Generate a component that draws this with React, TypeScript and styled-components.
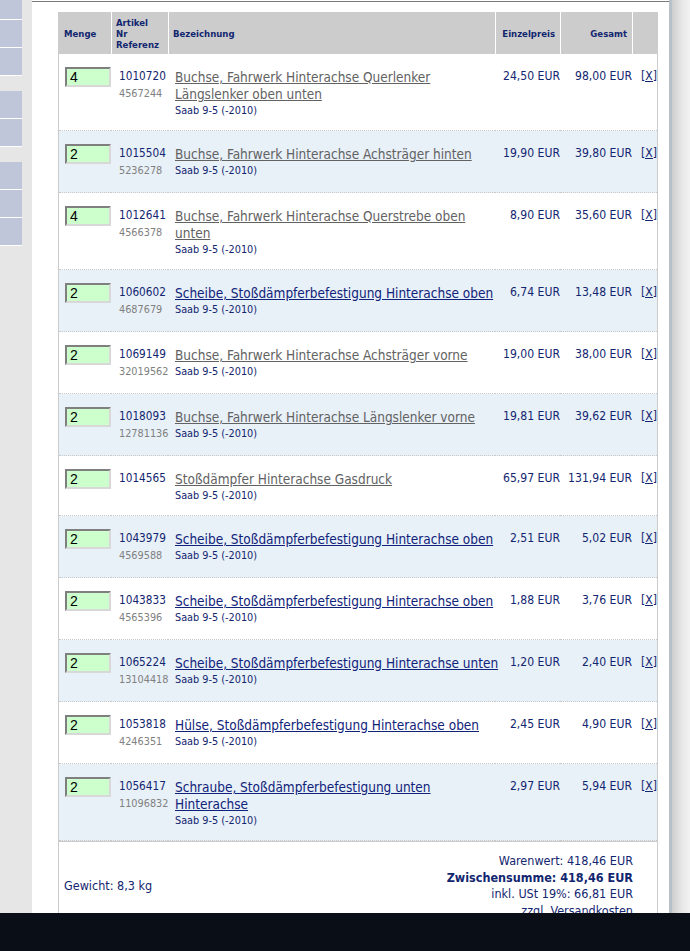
import React from "react";
import styled, { createGlobalStyle } from "styled-components";

const GlobalStyle = createGlobalStyle`
  html, body { margin: 0; padding: 0; background: #ffffff; }
  body {
    font-family: "DejaVu Sans Condensed", "DejaVu Sans", sans-serif;
    font-stretch: condensed;
    color: #10246e;
  }
`;

const NAVY = "#12266f";

type Item = {
  qty: string;
  nr: string;
  ref?: string;
  title: string[];
  link: boolean;
  price: string;
  total: string;
};

const items: Item[] = [
  { qty: "4", nr: "1010720", ref: "4567244", title: ["Buchse, Fahrwerk Hinterachse Querlenker", "Längslenker oben unten"], link: false, price: "24,50 EUR", total: "98,00 EUR" },
  { qty: "2", nr: "1015504", ref: "5236278", title: ["Buchse, Fahrwerk Hinterachse Achsträger hinten"], link: false, price: "19,90 EUR", total: "39,80 EUR" },
  { qty: "4", nr: "1012641", ref: "4566378", title: ["Buchse, Fahrwerk Hinterachse Querstrebe oben", "unten"], link: false, price: "8,90 EUR", total: "35,60 EUR" },
  { qty: "2", nr: "1060602", ref: "4687679", title: ["Scheibe, Stoßdämpferbefestigung Hinterachse oben"], link: true, price: "6,74 EUR", total: "13,48 EUR" },
  { qty: "2", nr: "1069149", ref: "32019562", title: ["Buchse, Fahrwerk Hinterachse Achsträger vorne"], link: false, price: "19,00 EUR", total: "38,00 EUR" },
  { qty: "2", nr: "1018093", ref: "12781136", title: ["Buchse, Fahrwerk Hinterachse Längslenker vorne"], link: false, price: "19,81 EUR", total: "39,62 EUR" },
  { qty: "2", nr: "1014565", title: ["Stoßdämpfer Hinterachse Gasdruck"], link: false, price: "65,97 EUR", total: "131,94 EUR" },
  { qty: "2", nr: "1043979", ref: "4569588", title: ["Scheibe, Stoßdämpferbefestigung Hinterachse oben"], link: true, price: "2,51 EUR", total: "5,02 EUR" },
  { qty: "2", nr: "1043833", ref: "4565396", title: ["Scheibe, Stoßdämpferbefestigung Hinterachse oben"], link: true, price: "1,88 EUR", total: "3,76 EUR" },
  { qty: "2", nr: "1065224", ref: "13104418", title: ["Scheibe, Stoßdämpferbefestigung Hinterachse unten"], link: true, price: "1,20 EUR", total: "2,40 EUR" },
  { qty: "2", nr: "1053818", ref: "4246351", title: ["Hülse, Stoßdämpferbefestigung Hinterachse oben"], link: true, price: "2,45 EUR", total: "4,90 EUR" },
  { qty: "2", nr: "1056417", ref: "11096832", title: ["Schraube, Stoßdämpferbefestigung unten", "Hinterachse"], link: true, price: "2,97 EUR", total: "5,94 EUR" },
];

const navGroups: number[][] = [[19, 27, 27], [27, 27], [27, 27, 27]];

const Page = styled.div`
  display: flex;
  min-height: 951px;
`;

const Sidebar = styled.nav`
  width: 32px;
  flex: none;
  background: #e6e6e6;
  display: flex;
  flex-direction: column;
  gap: 15px;
`;

const NavGroup = styled.div`
  display: flex;
  flex-direction: column;
`;

const NavItem = styled.div<{ $h: number }>`
  width: 22px;
  height: ${(p) => p.$h}px;
  background: #c0c6da;
  border-bottom: 1px solid #ffffff;
`;

const Main = styled.main`
  flex: 1;
  background: linear-gradient(#ffffff 0 1px, #7a7a7a 1px 2px, #ffffff 2px);
  padding: 12px 11px 0 26px;
`;

const RightEdge = styled.div`
  width: 21px;
  flex: none;
  border-left: 3px solid #b8c0c8;
  background: linear-gradient(90deg, #cdcdcd, #e9e9e9 60%, #f1f1f1);
  box-sizing: border-box;
`;

const Table = styled.table`
  width: 600px;
  table-layout: fixed;
  border-collapse: separate;
  border-spacing: 0;
  border-left: 1px solid #cccccc;
  border-right: 1px solid #cccccc;
`;

const Th = styled.th<{ $align?: string; $sep?: boolean }>`
  height: 42px;
  padding: 0 5px;
  background: #cccccc;
  color: ${NAVY};
  font-size: 9.5px;
  font-weight: bold;
  line-height: 11px;
  text-align: ${(p) => p.$align || "left"};
  vertical-align: middle;
  box-shadow: ${(p) => (p.$sep ? "inset 1px 0 0 #ffffff" : "none")};
`;

const Tr = styled.tr<{ $alt: boolean }>`
  background: ${(p) => (p.$alt ? "#e8f0f8" : "#ffffff")};
`;

const Td = styled.td<{ $pl?: number; $pt?: number; $pb?: number; $align?: string }>`
  padding: ${(p) => p.$pt ?? 15}px 0 ${(p) => p.$pb ?? 11}px ${(p) => p.$pl ?? 0}px;
  text-align: ${(p) => p.$align || "left"};
  vertical-align: top;
  border-bottom: 1px dotted #c8c8c8;
  font-size: 12.1px;
  line-height: 16px;
  color: ${NAVY};
  white-space: nowrap;
`;

const QtyInput = styled.input`
  display: block;
  box-sizing: border-box;
  width: 46px;
  height: 20px;
  margin: 0;
  padding: 0 3px;
  background: #ccffcc;
  border: 2px solid;
  border-color: #7f7f7f #d8d8d8 #d8d8d8 #7f7f7f;
  font-family: "Liberation Sans", Arial, sans-serif;
  font-size: 14px;
  color: #000000;
`;

const Nr = styled.div`
  font-size: 11.7px;
  line-height: 17px;
`;

const RefNr = styled.div`
  font-size: 10.8px;
  line-height: 17px;
  color: #808080;
`;

const Title = styled.a<{ $link: boolean }>`
  display: block;
  font-size: 13.5px;
  line-height: 17px;
  color: ${(p) => (p.$link ? "#0f237a" : "#626262")};
  text-decoration: underline;
  cursor: pointer;
`;

const Model = styled.div`
  font-size: 10.8px;
  line-height: 16px;
  color: ${NAVY};
`;

const Remove = styled.a`
  color: ${NAVY};
  text-decoration: underline;
  cursor: pointer;
`;

const FootTd = styled.td<{ $align?: string; $pr?: number; $pl?: number }>`
  border-top: 1px solid #cccccc;
  padding: 11px ${(p) => p.$pr ?? 0}px 10px ${(p) => p.$pl ?? 0}px;
  text-align: ${(p) => p.$align || "left"};
  vertical-align: middle;
  font-size: 12.5px;
  line-height: 16.5px;
  color: ${NAVY};
  white-space: nowrap;
`;

const Strong = styled.div`
  font-weight: bold;
`;

const FootLink = styled.a`
  text-decoration: underline;
  color: ${NAVY};
`;

const Taskbar = styled.div`
  position: fixed;
  left: 0;
  right: 0;
  bottom: 0;
  height: 38px;
  background: #0a0e17;
`;

export default function App() {
  return (
    <>
      <GlobalStyle />
      <Page>
        <Sidebar>
          {navGroups.map((g, gi) => (
            <NavGroup key={gi}>
              {g.map((h, i) => (
                <NavItem key={i} $h={h} />
              ))}
            </NavGroup>
          ))}
        </Sidebar>
        <Main>
          <Table>
            <colgroup>
              <col style={{ width: 52 }} />
              <col style={{ width: 57 }} />
              <col style={{ width: 327 }} />
              <col style={{ width: 65 }} />
              <col style={{ width: 72 }} />
              <col style={{ width: 25 }} />
            </colgroup>
            <thead>
              <tr>
                <Th>Menge</Th>
                <Th $sep>
                  Artikel
                  <br />
                  Nr
                  <br />
                  Referenz
                </Th>
                <Th $sep>Bezeichnung</Th>
                <Th $sep $align="right">Einzelpreis</Th>
                <Th $sep $align="right">Gesamt</Th>
                <Th $sep />
              </tr>
            </thead>
            <tbody>
              {items.map((it, i) => (
                <Tr key={i} $alt={i % 2 === 1}>
                  <Td $pl={6} $pt={13}>
                    <QtyInput defaultValue={it.qty} />
                  </Td>
                  <Td $pl={8} $pt={14} $pb={13}>
                    <Nr>{it.nr}</Nr>
                    {it.ref && <RefNr>{it.ref}</RefNr>}
                  </Td>
                  <Td $pl={7}>
                    {it.title.map((l, j) => (
                      <Title key={j} $link={it.link}>
                        {l}
                      </Title>
                    ))}
                    <Model>Saab 9-5 (-2010)</Model>
                  </Td>
                  <Td $align="right" $pt={14}>{it.price}</Td>
                  <Td $align="right" $pt={14}>{it.total}</Td>
                  <Td $pl={9} $pt={14}>
                    <Remove>[X]</Remove>
                  </Td>
                </Tr>
              ))}
              <tr>
                <FootTd colSpan={2} $pl={5}>
                  Gewicht: 8,3 kg
                </FootTd>
                <FootTd colSpan={4} $align="right" $pr={24}>
                  <div>Warenwert: 418,46 EUR</div>
                  <Strong>Zwischensumme: 418,46 EUR</Strong>
                  <div>inkl. USt 19%: 66,81 EUR</div>
                  <FootLink>zzgl. Versandkosten</FootLink>
                </FootTd>
              </tr>
            </tbody>
          </Table>
        </Main>
        <RightEdge />
      </Page>
      <Taskbar />
    </>
  );
}
